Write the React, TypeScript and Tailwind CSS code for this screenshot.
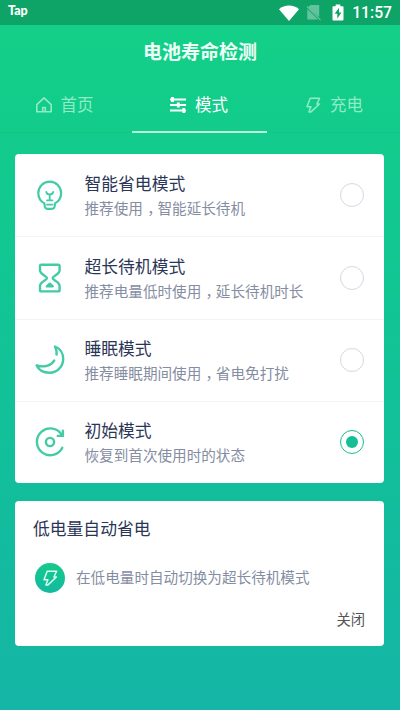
import React, { useState } from "react";

interface IconProps {
  className?: string;
}

interface IMode {
  id: string;
  title: string;
  description: string;
  Icon: React.FC<IconProps>;
}

const BoltIcon: React.FC<IconProps> = ({ className }) => (
  <svg viewBox="0 0 18 18" fill="none" stroke="currentColor" strokeWidth="1.5" strokeLinejoin="round" className={className}>
    <path d="M6.2 2.3h9.4l-2.7 5.7h2.5L7 15.9H4.9l2-5.2H3z" />
  </svg>
);

const HomeIcon: React.FC<IconProps> = ({ className }) => (
  <svg viewBox="0 0 18 18" fill="none" stroke="currentColor" strokeWidth="1.6" strokeLinejoin="round" className={className}>
    <path d="M1.8 8.6 9 1.8l7.2 6.8v7.1H1.8z" />
    <path d="M7.7 15.6v-4.1h2.6v4.1" />
  </svg>
);

const SlidersIcon: React.FC<IconProps> = ({ className }) => (
  <svg viewBox="0 0 18 18" fill="none" stroke="currentColor" strokeWidth="1.8" className={className}>
    <path d="M1 3.5h16M1 9h16M1 14.5h16" />
    <path d="M3.5 1.1v4.8M9.3 6.6v4.8M14.8 12.1v4.8" strokeWidth="2.8" />
  </svg>
);

const BulbIcon: React.FC<IconProps> = ({ className }) => (
  <svg viewBox="0 0 32 32" fill="none" stroke="currentColor" strokeWidth="2.2" strokeLinejoin="round" strokeLinecap="round" className={className}>
    <path d="M10.4 24.4C6.7 22.4 4.3 18.4 4.3 14a11.4 11.4 0 0 1 22.8 0c0 4.4-2.4 8.4-6.1 10.4l-.5 3.6q-.6 1.8-2.4 1.8h-4.8q-1.8 0-2.4-1.8z" />
    <path d="M12.3 13c.3 1.8 1.5 2.5 3.4 2.5s3.1-.7 3.4-2.5M15.7 15.8v5.4M13 21.4h5.4M13 25.6h5.4" strokeWidth="1.8" />
  </svg>
);

const HourglassIcon: React.FC<IconProps> = ({ className }) => (
  <svg viewBox="0 0 32 32" fill="none" stroke="currentColor" strokeWidth="2.4" strokeLinejoin="round" strokeLinecap="round" className={className}>
    <path d="M7.4 2.8h16.8q1.4 0 1.4 1.4v4c0 4.5-7 5.5-7 7.9s7 3.4 7 7.9v4q0 1.4-1.4 1.4H7.4Q6 29.4 6 28v-4c0-4.5 7-5.5 7-7.9S6 12.7 6 8.2v-4q0-1.4 1.4-1.4z" />
    <path d="m12.8 24.3 3-2.6 3 2.6z" fill="currentColor" />
  </svg>
);

const MoonIcon: React.FC<IconProps> = ({ className }) => (
  <svg viewBox="0 0 32 32" fill="none" stroke="currentColor" strokeWidth="2.4" strokeLinejoin="round" strokeLinecap="round" className={className}>
    <path d="M22.6 10.6c.4-2.8-.4-5.5-1.6-8.1 5 2 8.2 6.9 8.2 12.3 0 7.7-6 14-13.6 14-5.8 0-11-2.9-13-7.5 7.1 2.4 14.2.9 17.6-4.7" />
  </svg>
);

const ResetIcon: React.FC<IconProps> = ({ className }) => (
  <svg viewBox="0 0 32 32" fill="none" stroke="currentColor" strokeWidth="2.4" strokeLinejoin="round" strokeLinecap="round" className={className}>
    <path d="M28.1 9.5A13.4 13.4 0 1 0 28.3 21.8" />
    <path d="M23.8 9.9h5.1V4.7" strokeLinejoin="miter" />
    <circle cx="16" cy="16" r="4.1" />
  </svg>
);

const modes: IMode[] = [
  { id: "smart", title: "智能省电模式", description: "推荐使用，智能延长待机", Icon: BulbIcon },
  { id: "standby", title: "超长待机模式", description: "推荐电量低时使用，延长待机时长", Icon: HourglassIcon },
  { id: "sleep", title: "睡眠模式", description: "推荐睡眠期间使用，省电免打扰", Icon: MoonIcon },
  { id: "default", title: "初始模式", description: "恢复到首次使用时的状态", Icon: ResetIcon },
];

const tabs = [
  { label: "首页", Icon: HomeIcon },
  { label: "模式", Icon: SlidersIcon },
  { label: "充电", Icon: BoltIcon },
];

const tabStyles = [
  "flex items-center justify-center gap-2 pb-px pr-1 text-[#90ebc6]",
  "-mb-px flex items-center justify-center gap-2 border-b-2 border-[#b8f5dc] pr-0.5 text-white",
  "flex items-center justify-center gap-2 pb-px text-[#90ebc6]",
];

// half-width comma, padded so it sits in the middle of a full cell
const Description: React.FC<{ text: string }> = ({ text }) => {
  const [head, tail] = text.split("，");
  return (
    <p className="pt-px text-[14.6px] leading-5 text-[#858da2] whitespace-nowrap">
      {head}
      {tail && <span className="pl-[4.3px] pr-[3px] [font-feature-settings:'halt']">，</span>}
      {tail}
    </p>
  );
};

const StatusBar = () => (
  <div className="flex h-[25px] items-center bg-[#0ea468] pl-2 pr-2 text-white">
    <span className="-mt-1 font-[Lato] text-[12.5px] font-black leading-4">Tap</span>
    <div className="ml-auto flex items-center">
      <svg viewBox="0 0 20 16" className="h-4 w-5" fill="currentColor">
        <path d="M0 4.2C2.8 1.8 6.2.6 10 .6s7.2 1.2 10 3.6L10 16z" />
      </svg>
      <svg viewBox="0 0 16 17" className="ml-[7px] h-[17px] w-4" opacity="0.35">
        <path d="M4.5 1h8.7v12L1.8 3.4zM1.3 5v10.5h10.8z" fill="currentColor" />
        <path d="m1 2.5 13.5 13.6" stroke="currentColor" strokeWidth="1.3" />
      </svg>
      <svg viewBox="0 0 12 17" className="ml-2.5 h-[17px] w-3">
        <path d="M3.7.5h4.6v1.7h2.3q.9 0 .9.9v12.5q0 .9-.9.9H1.4q-.9 0-.9-.9V3.1q0-.9.9-.9h2.3z" fill="currentColor" />
        <path d="M7 3.8 2.7 9.7h2.6v4.8l4.2-6H7z" fill="#0ea468" />
      </svg>
      <span className="ml-2 font-[Roboto] text-[15.7px] font-medium leading-5">11:57</span>
    </div>
  </div>
);

const App: React.FC = () => {
  const [selected, setSelected] = useState("default");

  return (
    <div
      lang="zh-CN"
      className="h-[710px] w-[400px] overflow-hidden bg-linear-to-b from-[#13cf87] from-5% to-[#14b5a5] font-['Noto_Sans_CJK_SC',sans-serif]"
    >
      <StatusBar />
      <h1 className="flex h-[53px] items-center justify-center text-[19px] font-bold text-[#eefff8]">
        电池寿命检测
      </h1>

      <nav className="grid h-[55px] grid-cols-[132px_135px_133px] border-b border-[#10c683]">
        {tabs.map(({ label, Icon }, i) => (
          <button key={label} className={tabStyles[i]}>
            <Icon className="size-[18px]" />
            <span className="-mt-px text-[16.5px] leading-6">{label}</span>
          </button>
        ))}
      </nav>

      <main className="flex flex-col gap-[18px] pl-[15px] pt-[21px] pr-4">
        <ul className="h-[329px] rounded-[4px] bg-white">
          {modes.map(({ id, title, description, Icon }, i) => (
            <li
              key={id}
              onClick={() => setSelected(id)}
              className={
                i === 0
                  ? "flex h-[82.25px] items-center pl-[19px] pr-5"
                  : "flex h-[82.25px] items-center border-t border-[#f3f4f6] pl-[19px] pr-5"
              }
            >
              <Icon className="size-8 shrink-0 text-[#42cba5]" />
              <div className="ml-[18.5px] flex-1 pb-[3px]">
                <h2 className="text-[16.8px] leading-7 text-[#2b3656]">{title}</h2>
                <Description text={description} />
              </div>
              {selected === id ? (
                <span className="flex size-6 items-center justify-center rounded-full border border-[#15bf94]">
                  <span className="size-3 rounded-full bg-[#15bf94]" />
                </span>
              ) : (
                <span className="size-6 rounded-full border-[1.5px] border-[#d6d8e2]" />
              )}
            </li>
          ))}
        </ul>

        <section className="flex h-[145px] flex-col rounded-[4px] bg-white px-[18px] pt-[13px]">
          <h2 className="text-[16.8px] leading-7 text-[#2b3656]">低电量自动省电</h2>
          <div className="mt-[21px] flex items-center pl-[2px]">
            <span className="flex size-[30px] items-center justify-center rounded-full bg-linear-to-b from-[#14ca8a] to-[#14b9a0] text-[#d8fff2]">
              <BoltIcon className="size-[18px]" />
            </span>
            <p className="-mt-0.5 ml-[11px] text-[14.6px] leading-5 text-[#858da2]">在低电量时自动切换为超长待机模式</p>
          </div>
          <button className="mt-3.5 mr-px self-end text-[14.3px] leading-6 text-[#555]">关闭</button>
        </section>
      </main>
    </div>
  );
};

export default App;
